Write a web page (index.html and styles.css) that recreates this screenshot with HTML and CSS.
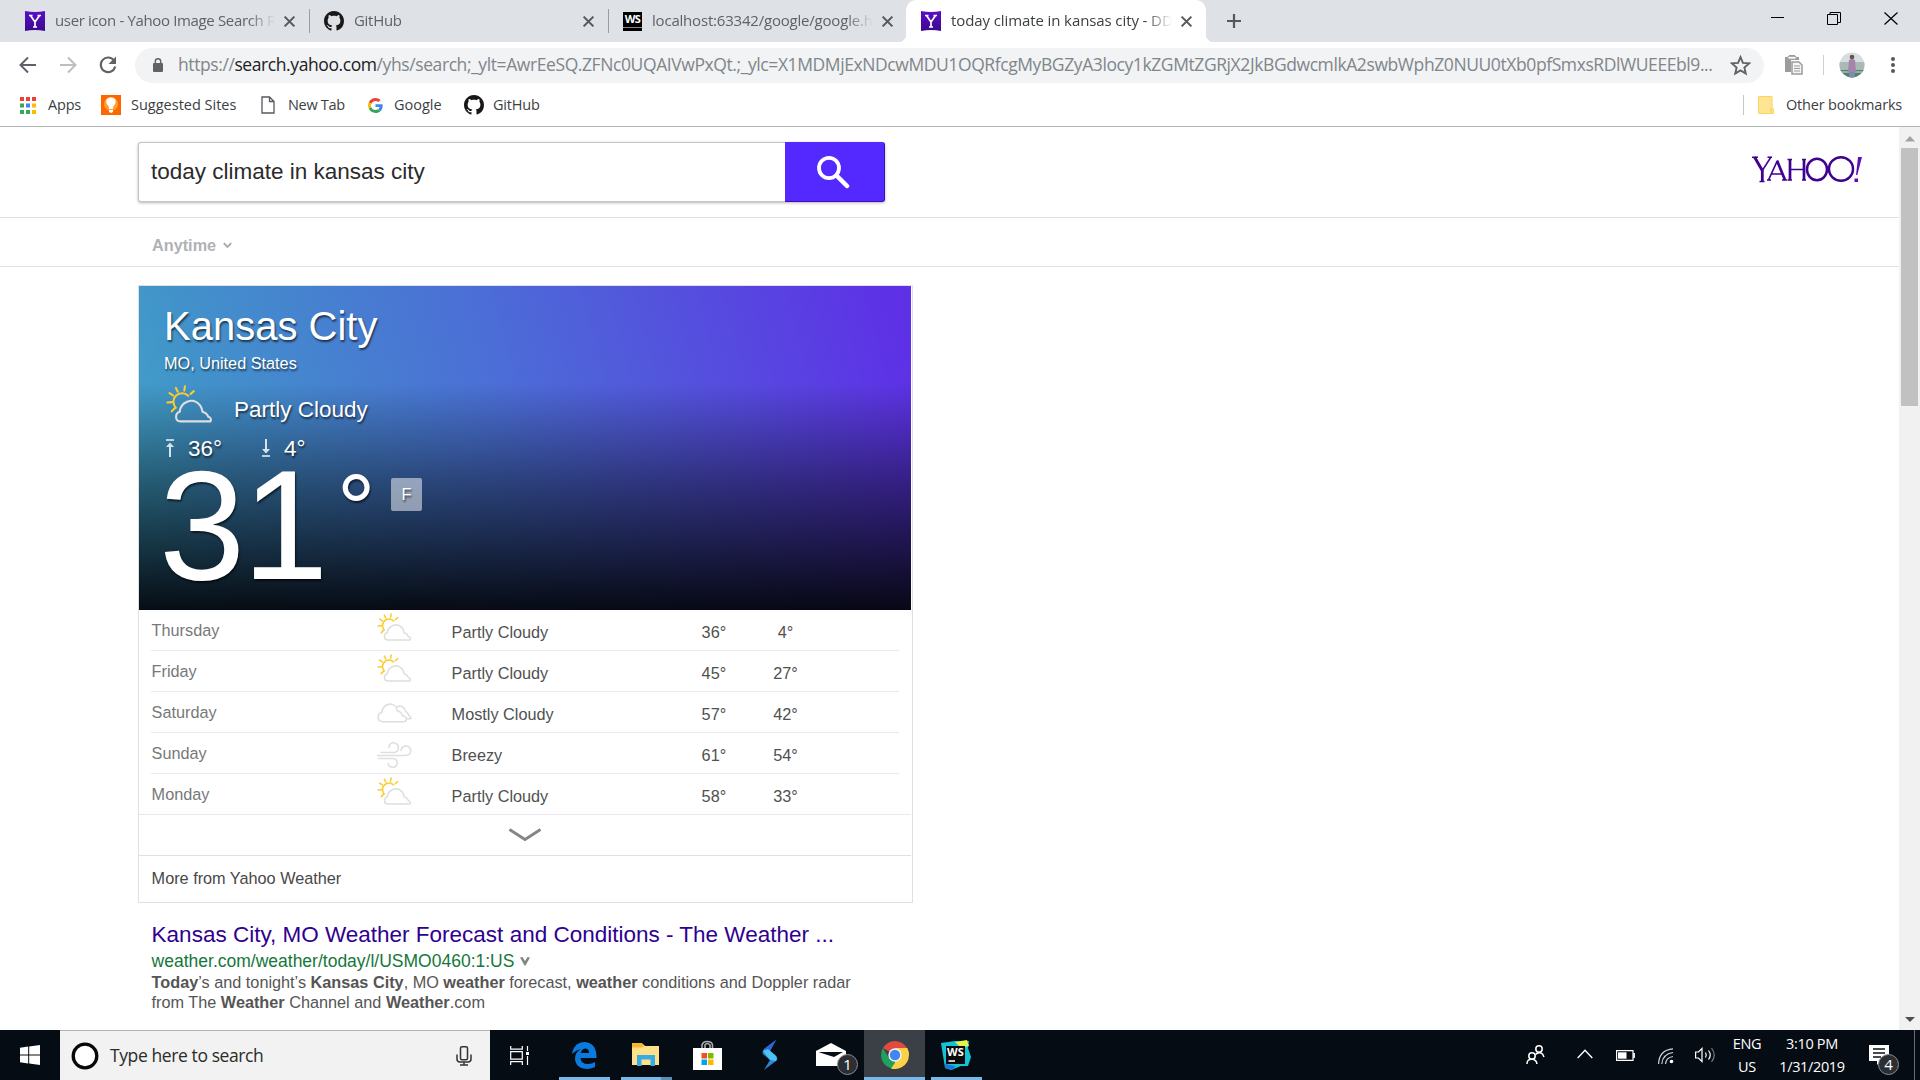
FILE: index.html
```html
<!DOCTYPE html>
<html lang="en">
<head>
<meta charset="utf-8">
<title>today climate in kansas city</title>
<link rel="stylesheet" href="styles.css">
</head>
<body>
<svg class="defs" width="0" height="0">
  <defs>
    <linearGradient id="yg" x1="0" y1="0" x2="0" y2="1"><stop offset="0" stop-color="#5a0fc8"/><stop offset="1" stop-color="#3c0a8c"/></linearGradient>
    <symbol id="yfav" viewBox="0 0 20 20"><path d="M0 0Q10 2 20 0V20Q10 18 0 20Z" fill="url(#yg)"/><path d="M5.500 4.500L10 11V16M14.500 4.500L10 11M4 4.500H7.500M12.500 4.500H16M8 16H12" stroke="#fff" stroke-width="1.700" fill="none"/></symbol>
    <symbol id="gh" viewBox="0 0 16 16"><path fill="#191717" d="M8 0C3.580 0 0 3.580 0 8c0 3.540 2.290 6.530 5.470 7.590.4.070.55-.17.55-.38 0-.19-.01-.82-.01-1.490-2.010.37-2.530-.49-2.690-.94-.09-.23-.48-.94-.82-1.130-.28-.15-.68-.52-.01-.53.63-.01 1.080.58 1.230.82.72 1.210 1.870.87 2.330.66.07-.52.28-.87.51-1.070-1.780-.2-3.640-.89-3.640-3.950 0-.87.31-1.590.82-2.150-.08-.2-.36-1.020.08-2.120 0 0 .67-.21 2.200.82.64-.18 1.320-.27 2-.27s1.360.09 2 .27c1.530-1.040 2.200-.82 2.200-.82.44 1.100.16 1.920.08 2.120.51.56.82 1.270.82 2.150 0 3.070-1.870 3.750-3.650 3.950.29.25.54.73.54 1.480 0 1.070-.01 1.930-.01 2.200 0 .21.15.46.55.38A8.010 8.010 0 0016 8c0-4.420-3.580-8-8-8z"/></symbol>
    <symbol id="x" viewBox="0 0 12 12"><path d="M1.500 1.500L10.500 10.500M10.500 1.500L1.500 10.500" stroke="#55585c" stroke-width="1.900"/></symbol>
    <symbol id="pcloud" viewBox="0 0 36 30"><g fill="none" stroke-width="1.600" stroke-linecap="round"><path stroke="#fccb2f" d="M7.500 17.500A5.500 5.500 0 1 1 17 8.300M1 13.500L4.500 13.200M2.600 6.300L5.300 8M7.500 2.200L9 5.200M14.500 1L14 4.300M21.300 4.700L18.800 7M4.300 20.300L6.800 17.700"/><path class="cl" d="M11 28C6.500 28 6.800 21.500 10.500 20.500C11 14 20 8.500 26 15.500C27.500 17.500 27.500 19 28 20.500C31 21.500 32 23 32.500 24.500C34.500 25 35 27 34 28Z"/></g></symbol>
    <symbol id="mcloud" viewBox="0 0 36 22"><g fill="none" stroke="#dedede" stroke-width="1.600"><path d="M6 20C-.5 20 0 11 5 10.500C6.500 0 19 -1.500 21 9C24 9.500 25.500 11 26 13.500C31 14 31.500 20 27.500 20Z"/><path d="M20 5C25 2 29 5.500 29.500 9.500C32 10.500 32.500 13 33 14C35.500 15 35 17 34 17H30"/></g></symbol>
    <symbol id="wind" viewBox="0 0 36 28"><g fill="none" stroke="#dedede" stroke-width="1.600"><path d="M3.500 11.500H17C24 11.500 23.500 1 16.500 1.500C13 2 12 4.500 12.500 7M0 14.500H29C37 14 36 4.500 29.500 4.800C26 5 24.500 7.500 25 10M1 17.500H16C22.500 18 22 26.500 16 26.500C13 26.500 11.500 24.500 11.500 22"/></g></symbol>
  </defs>
</svg>

<header class="browser">
  <div class="tabstrip ui">
    <div class="tab"><svg class="fav"><use href="#yfav"/></svg><span class="tabtitle tt1">user icon - Yahoo Image Search Results</span><svg class="close"><use href="#x"/></svg></div>
    <div class="tab sep"><svg class="fav"><use href="#gh"/></svg><span class="tabtitle">GitHub</span><svg class="close"><use href="#x"/></svg></div>
    <div class="tab sep"><span class="wsfav">WS</span><span class="tabtitle tt3">localhost:63342/google/google.html</span><svg class="close"><use href="#x"/></svg></div>
    <div class="tab active"><svg class="fav"><use href="#yfav"/></svg><span class="tabtitle tt4">today climate in kansas city - DDG Search</span><svg class="close"><use href="#x"/></svg></div>
    <svg class="plus" viewBox="0 0 16 16"><path d="M8 1V15M1 8H15" stroke="#55585c" stroke-width="2.200"/></svg>
    <div class="winctl">
      <svg width="14" height="20"><path d="M1 9.500H14" stroke="#000"/></svg>
      <svg width="14" height="20" fill="none" stroke="#000"><path d="M.5 6.500H10.500V16.500H.5ZM3 6V4.500H13.500V14.500H11"/></svg>
      <svg width="14" height="20"><path d="M.5 4.500L13.500 16.500M13.500 4.500L.5 16.500" stroke="#000" stroke-width="1.200"/></svg>
    </div>
  </div>
  <div class="toolbar ui">
    <svg class="nav" viewBox="0 0 20 20"><path d="M18 10H3M10 2.500L2.500 10L10 17.500" fill="none" stroke="#5f6368" stroke-width="2"/></svg>
    <svg class="nav" viewBox="0 0 20 20"><path d="M2 10H17M10 2.500L17.500 10L10 17.500" fill="none" stroke="#bcbec0" stroke-width="2"/></svg>
    <svg class="nav" viewBox="0 0 20 20"><path d="M16 5.500A7.300 7.300 0 1 0 17.200 11.500" fill="none" stroke="#5f6368" stroke-width="2.100"/><path d="M18 1.500V9H10.500Z" fill="#5f6368"/></svg>
    <div class="omnibox">
      <svg class="lock" viewBox="0 0 12 14"><rect x="1" y="5" width="10" height="9" rx="1" fill="#5f6368"/><path d="M3.300 6V3.500A2.700 2.700 0 0 1 8.700 3.500V6" fill="none" stroke="#5f6368" stroke-width="1.400"/></svg>
      <span class="url">https://<b>search.yahoo.com</b>/yhs/search;_ylt=AwrEeSQ.ZFNc0UQAIVwPxQt.;_ylc=X1MDMjExNDcwMDU1OQRfcgMyBGZyA3locy1kZGMtZGRjX2JkBGdwcmlkA2swbWphZ0NUU0tXb0pfSmxsRDlWUEEEbl9...</span>
      <svg class="star" viewBox="0 0 20 20"><path d="M10 2L12.300 7.500L18.200 8L13.700 11.900L15 17.700L10 14.600L5 17.700L6.300 11.900L1.800 8L7.700 7.500Z" fill="none" stroke="#5f6368" stroke-width="1.800"/></svg>
    </div>
    <svg class="clip" viewBox="0 0 18 20"><path d="M0 2H4V0H10V2H14V5H6V17H0Z" fill="#9c9c9c"/><path d="M3 1.500H11V4H3Z" fill="#fff" stroke="#aaa"/><path d="M7 7H14L17 10V19H7Z" fill="#f4f4f4" stroke="#9c9c9c" stroke-width="1.500"/><path d="M9 11H15M9 13.500H15M9 16H15" stroke="#9c9c9c"/></svg>
    <i class="tsep"></i>
    <svg class="avatar" viewBox="0 0 26 26"><defs><clipPath id="ac"><circle cx="13" cy="13" r="12.500"/></clipPath></defs><g clip-path="url(#ac)"><rect width="26" height="26" fill="#d5dde0"/><path d="M0 10H26V19H0Z" fill="#a9b9b4"/><path d="M0 18H26V26H0Z" fill="#557c75"/><path d="M0 20H26" stroke="#d8dede"/><path d="M10 8Q13 6 16 8L17 20H9Z" fill="#a684ac"/><path d="M10 20H16V26H10Z" fill="#7790a7"/><circle cx="13" cy="5" r="2.300" fill="#6c4f47"/></g></svg>
    <svg class="dots" viewBox="0 0 4 16"><g fill="#55585c"><circle cx="2" cy="2" r="2"/><circle cx="2" cy="8" r="2"/><circle cx="2" cy="14" r="2"/></g></svg>
  </div>
  <div class="bookmarks ui">
    <svg class="bi apps" viewBox="0 0 16 17"><g fill="#ea4335"><path d="M0 0H4V4H0ZM6 0H10V4H6ZM12 0H16V4H12Z"/></g><path d="M0 6.500H4V10.500H0ZM0 13H4V17H0ZM6 13H10V17H6Z" fill="#34a853"/><path d="M6 6.500H10V10.500H6Z" fill="#4285f4"/><path d="M12 6.500H16V10.500H12ZM12 13H16V17H12Z" fill="#fbbc05"/></svg>
    <span class="b1">Apps</span>
    <svg class="bi bulb" viewBox="0 0 20 20"><rect width="20" height="20" fill="#f60"/><circle cx="10" cy="9" r="7" fill="#ff9d2e"/><path d="M10 2.500C4 2.500 4.500 8 7 10.500C8 11.500 8 12.500 8 14H12C12 12.500 12 11.500 13 10.500C15.500 8 16 2.500 10 2.500ZM8 15H12V17L10 18L8 17Z" fill="#fff"/></svg>
    <span class="b2">Suggested Sites</span>
    <svg class="bi page" viewBox="0 0 14 18"><path d="M1 1H8.500L13 5.500V17H1ZM8.500 1V5.500H13" fill="none" stroke="#55585c" stroke-width="1.300"/></svg>
    <span class="b3">New Tab</span>
    <svg class="bi goog" viewBox="0 0 48 48"><path fill="#EA4335" d="M24 9.500c3.540 0 6.710 1.220 9.210 3.600l6.850-6.850C35.900 2.380 30.470 0 24 0 14.620 0 6.510 5.380 2.560 13.220l7.980 6.190C12.430 13.720 17.740 9.500 24 9.500z"/><path fill="#4285F4" d="M46.980 24.550c0-1.570-.15-3.090-.38-4.550H24v9.020h12.940c-.58 2.960-2.260 5.480-4.780 7.180l7.730 6c4.510-4.180 7.090-10.360 7.090-17.650z"/><path fill="#FBBC05" d="M10.530 28.590c-.48-1.450-.76-2.990-.76-4.590s.27-3.140.76-4.590l-7.980-6.190C.92 16.460 0 20.120 0 24c0 3.880.92 7.540 2.560 10.780l7.970-6.190z"/><path fill="#34A853" d="M24 48c6.480 0 11.930-2.130 15.890-5.810l-7.730-6c-2.150 1.450-4.920 2.300-8.160 2.300-6.260 0-11.570-4.220-13.470-9.910l-7.980 6.190C6.510 42.620 14.620 48 24 48z"/></svg>
    <span class="b4">Google</span>
    <svg class="bi ghb"><use href="#gh"/></svg>
    <span class="b5">GitHub</span>
    <div class="other"><svg class="folder" viewBox="0 0 16 18"><path d="M1 .5H14V12Q15.500 12 15.500 14V17.500H1Q.5 17.500 .5 17V1Z" fill="#ffe494" stroke="#f7d662"/><path d="M13 12V17" stroke="#f7d662" stroke-width="1.500"/></svg><span class="b6">Other bookmarks</span></div>
  </div>
</header>

<div class="viewport">
  <main class="page">
    <div class="searchhead">
      <form class="search"><div class="q">today climate in kansas city</div><div class="go"><svg width="34" height="34" viewBox="0 0 34 34"><ellipse cx="13" cy="13" rx="10" ry="10.200" fill="none" stroke="#fff" stroke-width="3.800"/><path d="M20.500 20.500L31 31" stroke="#fff" stroke-width="4.500" stroke-linecap="round"/></svg></div></form>
      <svg class="logo" viewBox="0 0 110 27"><g fill="none" stroke="#400090"><path stroke-width="2.900" d="M2.500 1L10.300 14.500"/><path stroke-width="1.500" d="M19 1L10.300 14.500"/><path stroke-width="2.800" d="M10.300 14V25.500"/><path stroke-width="1.500" d="M0 1.300H6M15.500 1.300H20M7.500 25.500H12.500"/><path stroke-width="1.700" d="M16.500 24L25 5.500M19 18H31"/><path stroke-width="2.700" d="M25 4.500L33 24"/><path stroke-width="2.700" d="M38 3.500V24M52 3.500V24"/><path stroke-width="1.700" d="M38 13.500H52M15 24H19M30 24H35M35.500 24H40M50 24H54M35.500 3.500H40M50 3.500H54"/><ellipse cx="65" cy="13.500" rx="10" ry="10.700" stroke-width="2.500"/><ellipse cx="89" cy="13" rx="12" ry="11.700" stroke-width="2.500"/></g><path d="M106 1H110L105.300 19H104ZM102.500 22.500H106V26H102.500Z" fill="#5a10b8"/></svg>
    </div>
    <div class="filters"><span>Anytime</span><svg width="9" height="7" viewBox="0 0 9 7"><path d="M.8 1.200L4.500 5L8.200 1.200" fill="none" stroke="#a8a8ad" stroke-width="1.900"/></svg></div>

    <section class="card">
      <div class="hero">
        <h1>Kansas City</h1>
        <div class="region">MO, United States</div>
        <div class="now"><svg class="nowicon"><use href="#pcloud"/></svg><span>Partly Cloudy</span></div>
        <div class="hilo"><svg width="8" height="18" viewBox="0 0 8 18"><path d="M0 1H8" stroke="#d5e3ec" stroke-width="1.700"/><path d="M4 18V5" stroke="#d5e3ec" stroke-width="2"/><path d="M4 3.500L8 8H0Z" fill="#d5e3ec"/></svg><span class="hi">36°</span><svg width="8" height="18" viewBox="0 0 8 18"><path d="M0 17H8" stroke="#d5e3ec" stroke-width="1.700"/><path d="M4 0V12" stroke="#d5e3ec" stroke-width="2"/><path d="M4 14.500L8 10H0Z" fill="#d5e3ec"/></svg><span class="lo">4°</span></div>
        <div class="big"><span class="num">31</span><span class="deg">°</span><span class="unit">F</span></div>
      </div>
      <div class="days">
        <div class="day"><span class="d">Thursday</span><svg class="wi"><use href="#pcloud"/></svg><span class="c">Partly Cloudy</span><span class="h">36°</span><span class="l">4°</span></div>
        <div class="day"><span class="d">Friday</span><svg class="wi"><use href="#pcloud"/></svg><span class="c">Partly Cloudy</span><span class="h">45°</span><span class="l">27°</span></div>
        <div class="day"><span class="d">Saturday</span><svg class="wi mc"><use href="#mcloud"/></svg><span class="c">Mostly Cloudy</span><span class="h">57°</span><span class="l">42°</span></div>
        <div class="day"><span class="d">Sunday</span><svg class="wi wd"><use href="#wind"/></svg><span class="c">Breezy</span><span class="h">61°</span><span class="l">54°</span></div>
        <div class="day"><span class="d">Monday</span><svg class="wi"><use href="#pcloud"/></svg><span class="c">Partly Cloudy</span><span class="h">58°</span><span class="l">33°</span></div>
      </div>
      <div class="expand"><svg width="34" height="14" viewBox="0 0 34 14"><path d="M1.500 1.500L17 11.500L32.500 1.500" fill="none" stroke="#858585" stroke-width="2.800"/></svg></div>
      <div class="more">More from Yahoo Weather</div>
    </section>

    <section class="result">
      <h2>Kansas City, MO Weather Forecast and Conditions - The Weather ...</h2>
      <div class="link"><span>weather.com/weather/today/l/USMO0460:1:US</span><svg width="10" height="9" viewBox="0 0 10 9"><path d="M0 .5L2.500 0L5 4L7.500 0L10 .5L5.500 8.500H4.500Z" fill="#858585"/></svg></div>
      <p><b>Today</b>’s and tonight’s <b>Kansas City</b>, MO <b>weather</b> forecast, <b>weather</b> conditions and Doppler radar<br>from The <b>Weather</b> Channel and <b>Weather</b>.com</p>
    </section>
  </main>
  <aside class="scroll">
    <svg width="12" height="21" viewBox="0 0 12 21"><path d="M6 9L11 14.500H1Z" fill="#a3a3a3"/></svg>
    <i class="thumb"></i>
    <svg class="down" width="12" height="21" viewBox="0 0 12 21"><path d="M1 8H11L6 13Z" fill="#505050"/></svg>
  </aside>
</div>

<footer class="taskbar ui">
  <div class="start"><svg width="20" height="20" viewBox="0 0 20 20"><path d="M0 2.700L8.200 1.600V9.500H0ZM9.200 1.500L20 0V9.500H9.200ZM0 10.500H8.200V18.400L0 17.300ZM9.200 10.500H20V20L9.200 18.500Z" fill="#fff"/></svg></div>
  <div class="tsearch"><svg width="28" height="28" viewBox="0 0 28 28"><circle cx="14" cy="14" r="11.800" fill="#fff" stroke="#080808" stroke-width="3.300"/></svg><span>Type here to search</span><svg class="mic" width="16" height="20" viewBox="0 0 16 20"><g fill="none" stroke="#333" stroke-width="1.500"><rect x="4.500" y=".8" width="7" height="13" rx="1.500"/><path d="M1 8.500V13Q1 16 4 16H12Q15 16 15 13V8.500M8 16V19M4 19H12"/></g></svg></div>
  <div class="app tv"><svg width="20" height="19" viewBox="0 0 20 19"><g fill="none" stroke="#fff" stroke-width="1.200"><path d="M.7 0V3.200H12.300V0M.7 5.700H12.300V13.200H.7ZM.7 19V15.700H12.300V19M17.500 0V5M17.500 10V19"/></g><path d="M16 6H19V9H16Z" fill="#fff"/></svg></div>
  <div class="app run"><svg width="25" height="27" viewBox="0 0 25 27"><path d="M0 12Q2 0 13 0Q24 1 24.500 14V16H8.500Q9 22 16 22Q20 22 23 20V25Q19 27 14.500 27Q3 26 3 16Q3.500 10 9 7Q4 8 0 12ZM8.800 11H17Q17 6.500 13 6.500Q9.500 7 8.800 11Z" fill="#0a7bdc" fill-rule="evenodd"/></svg></div>
  <div class="app run multi"><svg width="28" height="24" viewBox="0 0 28 24"><path d="M0 1H11L13 3H27V22H0Z" fill="#ffe08a"/><path d="M0 0H10L12 3L10 4.500H0Z" fill="#f5b82e"/><path d="M5 23V12H23V23H18.500V16.500H9.500V23Z" fill="#36ace3"/></svg></div>
  <div class="app store"><svg width="29" height="30" viewBox="0 0 29 30"><path d="M9 9V5Q10 1.500 14 1.500Q19 1.500 19.500 5V9M12 9V5Q14 2 17 5V9" fill="none" stroke="#aaa" stroke-width="1.600"/><path d="M0 8H29V30H0Z" fill="#fff"/><path d="M8.500 13H14V18.500H8.500Z" fill="#f25022"/><path d="M15 13H20.500V18.500H15Z" fill="#7fba00"/><path d="M8.500 19.500H14V25H8.500Z" fill="#00a4ef"/><path d="M15 19.500H20.500V25H15Z" fill="#ffb900"/></svg></div>
  <div class="app"><svg width="18" height="31" viewBox="0 0 18 31"><path d="M15 0L3 9Q0 13 3 15L9 20L3 30L15 21Q18 18 14 15L9 11Z" fill="#2f83d4"/><path d="M15 0L3 9L9 11Z" fill="#3560dc"/><path d="M2 11L9 20L15 21Q17 18 14 15L7 9Z" fill="#4cc4f2"/></svg></div>
  <div class="app mail"><svg width="31" height="24" viewBox="0 0 31 24"><path d="M0 8L15 0L30 8V23H0Z" fill="#fff"/><path d="M2 9H27L18 14Z" fill="#080e16"/><path d="M0 8L15 17" stroke="#fff"/></svg><span class="badge">1</span></div>
  <div class="app run cur"><svg width="28" height="28" viewBox="0 0 28 28"><path d="M14 14L1.900 7A14 14 0 0 1 26.100 7Z" fill="#e04a3f"/><path d="M14 14L26.100 7A14 14 0 0 1 14 28L14 14Z" fill="#fdd147"/><path d="M14 14L14 28A14 14 0 0 1 1.900 7L8 17Z" fill="#1fa15d"/><path d="M14 7H26.100Q28 11 28 14L20 16L14 28Q11 28 10 27.500L16 19Z" fill="#fdd147"/><circle cx="14" cy="14" r="6.700" fill="#f1f1f1"/><circle cx="14" cy="14" r="5.200" fill="#4285f4"/></svg></div>
  <div class="app run wsapp"><svg width="30" height="30" viewBox="0 0 30 30"><path d="M0 3L14 1L28 1L27 8L30 17L27 26L20 26L10 30L4 28Z" fill="#12c4d6"/><path d="M14 2L26 0L28 6L20 8Z" fill="#e6f24a"/><path d="M4 24L14 26L12 30L4 28Z" fill="#1b73dc"/><path d="M5 6H24V24H5Z" fill="#0a0a0a"/><path d="M7.500 21H14" stroke="#fff" stroke-width="1.500"/><text x="6" y="16" class="wst">WS</text></svg></div>
  <div class="tray">
    <svg class="people" width="19" height="20" viewBox="0 0 19 20"><g fill="none" stroke="#fff" stroke-width="1.500"><circle cx="13" cy="4" r="3.200"/><path d="M9.500 9.500Q13 6 16.500 9L18 12"/><circle cx="6" cy="11" r="3.200"/><path d="M1 19Q1 14 6 14.200Q10.500 14.500 11 19"/></g></svg>
    <svg class="caret" width="16" height="10" viewBox="0 0 16 10"><path d="M.7 9L8 1.300L15.300 9" fill="none" stroke="#fff" stroke-width="1.400"/></svg>
    <svg class="batt" width="19" height="11" viewBox="0 0 19 11"><path d="M.6 .6H17V10.400H.6ZM18.300 3V8" fill="none" stroke="#fff" stroke-width="1.200"/><path d="M2 2.300H10.500V8.700H2Z" fill="#fff"/></svg>
    <svg class="wifi" width="16" height="16" viewBox="0 0 16 16"><g fill="none" stroke="#d0d3d6" stroke-width="1.200"><path d="M.6 16Q1 2 15 .8M3.800 16Q4.500 6 15 4.500M7.500 16Q8 9.500 15 8.500"/></g><circle cx="13.500" cy="13.500" r="1.800" fill="#fff"/></svg>
    <svg class="vol" width="21" height="18" viewBox="0 0 21 18"><g fill="none" stroke="#fff" stroke-width="1.200"><path d="M.6 6H3.500L7 2.500V15.500L3.500 12H.6ZM10.500 6.500Q12 9 10.500 11.500M13.500 4.500Q17 9 13.500 13.500"/><path stroke="#777c82" d="M16.500 2Q22 9 16.500 16"/></g></svg>
    <div class="stack lang"><span>ENG</span><span>US</span></div>
    <div class="stack clock"><span class="time">3:10 PM</span><span class="date">1/31/2019</span></div>
    <div class="notif"><svg width="20" height="20" viewBox="0 0 20 20"><path d="M0 0H20V16H12L8 20V16H0Z" fill="#fff"/><path d="M4 4H16M4 8H16M4 12H12" stroke="#0a1018" stroke-width="1.300"/></svg><span class="badge">4</span></div>
    <i class="peek"></i>
  </div>
</footer>
</body>
</html>
```
FILE: styles.css
```css
* { box-sizing: border-box; }
body { margin: 0; width: 1920px; height: 1080px; overflow: hidden; display: flex; flex-direction: column; background: #fff; font-family: "Liberation Sans", Arial, sans-serif; }
svg { display: block; flex: none; }
.defs { position: absolute; }
.ui { font-family: "Open Sans", "Noto Sans", sans-serif; }
span { white-space: nowrap; }

/* browser chrome */
.browser { flex: none; height: 127px; border-bottom: 1px solid #b4b5b6; }
.tabstrip { display: flex; align-items: stretch; height: 42px; background: #dee1e6; padding-left: 10px; font-size: 15px; color: #5f6368; }
.tab { position: relative; display: flex; align-items: center; width: 299px; padding: 0 13px 0 15px; }
.tab.sep::before { content: ""; position: absolute; left: 0; top: 9px; width: 1px; height: 24px; background: #9a9da1; }
.fav { width: 20px; height: 20px; margin-right: 10px; }
.wsfav { width: 19px; height: 19px; background: #000; color: #fff; font: bold 11px/13px "Open Sans", sans-serif; margin-right: 10px; text-align: center; border-bottom: 3px solid #000; letter-spacing: -.5px; box-shadow: inset 0 -1px #888; }
.tabtitle { flex: 1; overflow: hidden; letter-spacing: -.3px; padding-bottom: 2px; -webkit-mask-image: linear-gradient(90deg, #000 88%, transparent); }
.tt1 { letter-spacing: -.35px; }
.tt3 { letter-spacing: -.2px; }
.tt4 { letter-spacing: -.1px; }
.close { width: 13px; height: 13px; margin-left: 8px; }
.tab.active { width: 300px; margin-left: -1px; background: #fff; border-radius: 10px 10px 0 0; color: #3c4043; }
.tab.active::before, .tab.active::after { content: ""; position: absolute; bottom: 0; width: 8px; height: 8px; }
.tab.active::before { left: -8px; background: radial-gradient(circle at 0 0, transparent 8px, #fff 8.5px); }
.tab.active::after { right: -8px; background: radial-gradient(circle at 100% 0, transparent 8px, #fff 8.5px); }
.plus { width: 16px; height: 16px; margin: 13px 0 0 20px; }
.winctl { margin: 8px 22px 0 auto; display: flex; gap: 43px; }
.toolbar { display: flex; align-items: center; height: 46px; padding-left: 18px; }
.nav { width: 20px; height: 20px; margin-right: 20px; }
.omnibox { width: 1629px; height: 35px; margin-left: -3px; border-radius: 18px; background: #f1f3f4; display: flex; align-items: center; padding: 0 13px 0 17px; }
.lock { width: 12px; height: 14px; margin-right: 14px; }
.url { font-size: 17.500px; color: #80868b; width: 1540px; letter-spacing: -.41px; padding-bottom: 2px; }
.url b { font-weight: 400; color: #202124; }
.star { width: 21px; height: 21px; margin-left: auto; }
.clip { width: 18px; height: 20px; margin-left: 21px; }
.tsep { width: 1px; height: 20px; background: #d0d0d0; margin-left: 20px; }
.avatar { width: 26px; height: 26px; margin-left: 15px; }
.dots { width: 4px; height: 16px; margin-left: 26px; }
.bookmarks { display: flex; align-items: center; height: 34px; padding-left: 20px; font-size: 14.500px; color: #3c4043; letter-spacing: -.2px; }
.bookmarks span { padding-bottom: 2px; }
.apps { width: 16px; height: 17px; margin-right: 12px; }
.bulb { width: 20px; height: 20px; margin-right: 10px; }
.bi.page { width: 14px; height: 18px; margin-right: 13px; }
.goog { width: 15px; height: 15px; margin-right: 11px; }
.ghb { width: 20px; height: 20px; margin-right: 9px; }
.b1 { width: 53px; }
.b2 { width: 130px; letter-spacing: 0; }
.b3 { width: 80px; letter-spacing: -.3px; }
.b4 { width: 70px; letter-spacing: 0; }
.other { margin-left: auto; display: flex; align-items: center; height: 20px; border-left: 1px solid #c4c6c9; padding-left: 14px; width: 177px; }
.folder { width: 16px; height: 18px; margin-right: 12px; }

/* page */
.viewport { flex: none; height: 903px; display: flex; }
main.page { flex: 1; overflow: hidden; }
.searchhead { height: 91px; border-bottom: 1px solid #e0e0e3; padding: 15px 37px 0 138px; display: flex; justify-content: space-between; }
.search { display: flex; width: 747px; height: 60px; border-radius: 3px; box-shadow: 0 1px 3px rgba(0,0,0,.3); }
.q { flex: 1; border: 1px solid #c4c4c6; border-right: 0; border-radius: 3px 0 0 3px; font-size: 22.500px; line-height: 57px; padding-left: 12px; color: #2b2b2b; }
.go { width: 100px; background: #5329ff; border-radius: 0 3px 3px 0; border-bottom: 1px solid #3a0fc0; border-right: 1px solid #3a0fc0; padding: 13px 0 0 31px; }
.logo { width: 110px; height: 27px; margin-top: 14px; }
.filters { height: 49px; border-bottom: 1px solid #e0e0e3; padding: 7px 0 0 152px; display: flex; align-items: center; gap: 7px; font-size: 16.250px; font-weight: 700; color: #b1b1b6; }
.card { width: 775px; height: 618px; margin: 18px 0 0 138px; border: 1px solid #e0e0e3; }
.hero { width: 772px; height: 324px; padding: 16px 0 0 25px; color: #fff; text-shadow: 1px 2px 2px rgba(0,0,0,.6); background: linear-gradient(180deg, transparent 30%, rgba(0,0,0,.42) 60%, rgba(3,5,10,.95) 100%), linear-gradient(75deg, #3fa5c6 0%, #4292ca 14%, #4b6fd6 48%, #5e30e6 98%); }
h1 { margin: 0; font-size: 40px; font-weight: 400; line-height: 48px; }
.region { font-size: 16.250px; line-height: 24px; margin-top: 1px; }
.now { display: flex; align-items: flex-end; height: 49px; font-size: 22.500px; line-height: 26px; }
.nowicon { width: 47px; height: 39px; margin: 0 21px 0 2px; }
.now span { padding-bottom: 1px; }
.hilo { display: flex; align-items: center; height: 32px; margin: 8px 0 0 2px; font-size: 22.500px; }
.hilo span { padding-top: 2px; }
.hi { width: 74px; margin-left: 14px; }
.lo { margin-left: 14px; }
.big { display: flex; height: 130px; margin-left: -5px; align-items: flex-start; }
.num { font-size: 155px; line-height: 150px; margin-top: -13px; letter-spacing: -3px; width: 168px; }
.deg { font-size: 96px; line-height: 96px; margin: -3px 0 0 10px; width: 54px; }
.unit { width: 31px; height: 33px; margin-top: 14px; background: rgba(255,255,255,.5); border-radius: 2px; font-size: 16.250px; line-height: 33px; text-align: center; }
.cl { stroke: #dedede; }
.days { height: 205px; border-bottom: 1px solid #e9e9eb; padding: 0 12px; width: 772px; }
.day { height: 41px; border-bottom: 1px solid #e9e9eb; display: flex; font-size: 16.250px; line-height: 20px; color: #505050; padding-left: .6px; }
.day:last-child { border-bottom: 0; }
.d { width: 225px; padding-top: 10px; color: #787878; }
.wi { width: 35px; height: 29px; margin: 3px 40px 0 0; }
.wi.mc { height: 22px; margin-top: 10px; }
.wi.wd { height: 28px; margin-top: 8px; }
.c { width: 250px; padding-top: 12px; }
.h { width: 59px; padding-top: 12px; }
.l { width: 50px; text-align: center; padding-top: 12px; }
.expand { width: 772px; height: 41px; border-bottom: 1px solid #e0e0e3; padding: 13px 0 0 369px; }
.more { font-size: 16.250px; line-height: 44px; padding-left: 12.6px; color: #484848; }
.result { padding: 19px 0 0 151.6px; }
h2 { margin: 0; font-size: 22.500px; font-weight: 400; line-height: 26px; color: #300090; }
.link { display: flex; align-items: center; gap: 6px; font-size: 17.500px; line-height: 24px; padding-top: 1px; margin-bottom: -1px; color: #15773b; }
.result p { margin: 0; font-size: 16.250px; line-height: 20px; color: #555; }
.scroll { width: 21px; background: #f1f1f1; display: flex; flex-direction: column; align-items: center; }
.thumb { width: 17px; height: 258px; background: #c1c1c1; }
.down { margin-top: auto; }

/* taskbar */
.taskbar { flex: none; height: 50px; background: #060c14; display: flex; color: #fff; }
.start { width: 60px; padding: 15px 0 0 20px; }
.tsearch { width: 430px; background: #f2f2f2; border-top: 1px solid #b5b5b5; display: flex; align-items: center; padding: 0 18px 0 11px; color: #2b2b2b; font-size: 17.500px; letter-spacing: -.4px; }
.tsearch span { margin-left: 11px; padding-bottom: 1px; }
.mic { margin-left: auto; }
.app { position: relative; width: 62px; height: 50px; display: flex; align-items: center; justify-content: center; }
.app.tv { width: 63px; padding-right: 3px; }
.run::after { content: ""; position: absolute; left: 6px; right: 5px; bottom: 0; height: 3px; background: #76b9ed; }
.multi::after { background: linear-gradient(90deg, #76b9ed 40px, #5b8db5 40px); }
.store { padding-right: 2px; }
.mail { width: 63px; padding-right: 3px; }
.cur { width: 61px; background: #3b4047; }
.cur::after { left: 0; right: 0; }
.badge { position: absolute; width: 21px; height: 21px; border-radius: 50%; background: #2b2f33; border: 1px solid #8a8d90; font-size: 15px; line-height: 18px; text-align: center; color: #fff; }
.mail .badge { left: 36px; top: 24px; }
.wst { font: bold 11px "Open Sans", sans-serif; fill: #fff; }
.tray { margin-left: auto; display: flex; width: 394px; }
.people { margin: 15px 32px 0 0; }
.caret { margin: 19px 23px 0 0; }
.batt { margin: 20px 23px 0 0; }
.wifi { margin: 18px 21px 0 0; }
.vol { margin: 16px 10px 0 0; }
.stack { display: flex; flex-direction: column; align-items: center; font-size: 14.500px; line-height: 23px; padding-top: 2px; letter-spacing: -.35px; }
.lang { width: 42px; }
.clock { width: 88px; }
.notif { position: relative; padding: 15px 0 0 13px; width: 58px; }
.notif .badge { left: 22px; top: 24px; }
.peek { width: 1px; background: #6a6e73; }
```
